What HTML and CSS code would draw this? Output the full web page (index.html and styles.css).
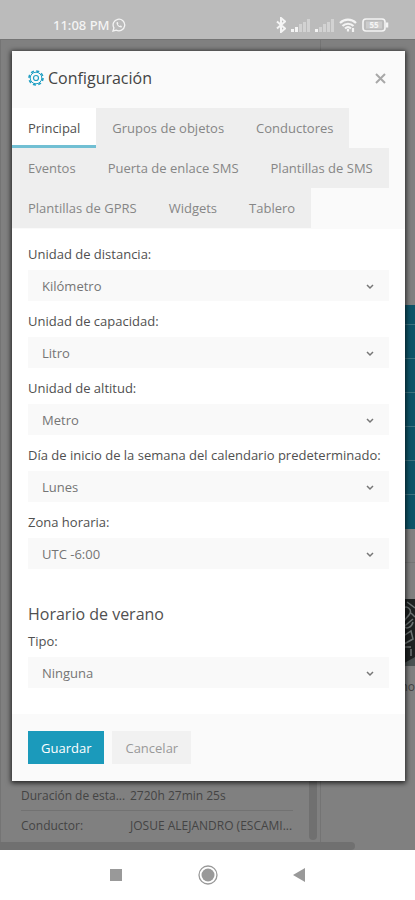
FILE: index.html
```html
<!DOCTYPE html>
<html lang="es">
<head>
<meta charset="utf-8">
<meta name="viewport" content="width=device-width, initial-scale=1">
<title>Configuración</title>
<link rel="stylesheet" href="styles.css">
</head>
<body>
<header class="status">
  <div class="status-group">
    <span class="clock">11:08 PM</span>
    <svg width="14" height="14" viewBox="0 0 14 14" fill="none" stroke="currentColor" stroke-width="1.3"><path d="M1 13l.9-3.1A5.8 5.8 0 1 1 4.200 12.100z"/><path d="M4.600 4.200c-.6 2.600 2.400 5.600 5 5.200l.3-1.300-1.500-.7-.7.7c-.9-.4-1.500-1.100-1.900-1.900l.6-.7-.6-1.500z" fill="currentColor" stroke="none"/></svg>
  </div>
  <div class="status-group status-icons">
    <svg width="10" height="16" viewBox="0 0 10 16" fill="none" stroke="currentColor" stroke-width="2"><path d="M1 4.500l8 7-4 3.500V1l4 3.500-8 7"/></svg>
    <svg width="19" height="14" viewBox="0 0 19 14" fill="currentColor"><path d="M0 11h3v3H0zM4 9h3v5H4z"/><path opacity=".4" d="M8 6h3v8H8zM12 4h3v10h-3zM16 1h3v13h-3z"/></svg>
    <svg width="19" height="14" viewBox="0 0 19 14" fill="currentColor"><path d="M0 11h3v3H0z"/><path opacity=".4" d="M4 9h3v5H4zM8 6h3v8H8zM12 4h3v10h-3zM16 1h3v13h-3z"/></svg>
    <svg width="18" height="14" viewBox="0 0 18 14" fill="none" stroke="currentColor" stroke-width="2.200"><path d="M1 5c4.500-4.500 11.500-4.500 16 0M3.500 8c3-3 8-3 11 0M6 10.500c2-1.800 4-1.800 6 0"/><path d="M9 11v2.500M14 10v4"/></svg>
    <svg width="27" height="14" viewBox="0 0 27 14" fill="none" stroke="currentColor" stroke-width="1.600"><rect x="1" y="1" width="22" height="12" rx="3"/><path d="M25 4.500v5" stroke-width="2.500"/><rect x="4" y="3.500" width="16" height="7" fill="currentColor" fill-opacity=".3" stroke="none"/><text class="battery-text" x="12" y="10" text-anchor="middle">55</text></svg>
  </div>
</header>

<main class="app">
  <div class="monitor">
    <section class="details">
      <table class="facts">
        <tbody>
          <tr><th scope="row">Duración de esta...</th><td>2720h 27min 25s</td></tr>
          <tr><th scope="row">Conductor:</th><td>JOSUE ALEJANDRO (ESCAMI...</td></tr>
        </tbody>
      </table>
      <div class="scroll-y"></div>
    </section>
    <aside class="side">
      <ul class="side-list"><li></li><li></li><li></li><li></li><li></li><li></li><li></li></ul>
      <div class="side-code">
        <svg width="16" height="67" viewBox="0 0 16 67" fill="none" stroke="#6d7474"><rect width="16" height="67" fill="#1d2121" stroke="none"/><path d="M3 10c5-5 11 1 7 6s-7 7-5 11 8 1 9-4M2 30l12-10M3 38l9-6 2 8-9 5M4 48h8M5 44v10M12 50v7M8 3l8 6M12 14l4 4" stroke-width="1.500"/><path d="M0 67l16-9v9z" fill="#4b5252" stroke="none"/></svg>
        <span>no</span>
      </div>
    </aside>
    <div class="scroll-x"></div>
  </div>

  <div class="overlay">
    <form class="dialog" role="dialog" aria-labelledby="dialog-title">
      <header class="dialog-head">
        <svg width="16" height="16" viewBox="0 0 16 16" fill="none" stroke="currentColor"><circle cx="8" cy="8" r="7" stroke-width="1.600" stroke-dasharray="3.100 2.398"/><circle cx="8" cy="8" r="5.800"/><circle cx="8" cy="8" r="2.500" stroke-width="1.200"/></svg>
        <h1 id="dialog-title">Configuración</h1>
        <button class="close" type="button" aria-label="Cerrar"><svg width="11" height="11" viewBox="0 0 11 11" fill="none" stroke="currentColor" stroke-width="2"><path d="M1 1l9 9M10 1l-9 9"/></svg></button>
      </header>
      <nav class="tabs">
        <a class="tab active" href="#principal">Principal</a>
        <a class="tab" href="#grupos">Grupos de objetos</a>
        <a class="tab" href="#conductores">Conductores</a>
        <a class="tab" href="#eventos">Eventos</a>
        <a class="tab" href="#puerta">Puerta de enlace SMS</a>
        <a class="tab" href="#sms">Plantillas de SMS</a>
        <a class="tab" href="#gprs">Plantillas de GPRS</a>
        <a class="tab" href="#widgets">Widgets</a>
        <a class="tab" href="#tablero">Tablero</a>
      </nav>
      <div class="fields">
        <div class="field">
          <label for="distancia">Unidad de distancia:</label>
          <div class="picker"><select id="distancia"><option>Kilómetro</option></select><svg class="chevron" width="8" height="6" viewBox="0 0 8 6"><path d="M1 1l3 3 3-3"/></svg></div>
        </div>
        <div class="field">
          <label for="capacidad">Unidad de capacidad:</label>
          <div class="picker"><select id="capacidad"><option>Litro</option></select><svg class="chevron" width="8" height="6" viewBox="0 0 8 6"><path d="M1 1l3 3 3-3"/></svg></div>
        </div>
        <div class="field">
          <label for="altitud">Unidad de altitud:</label>
          <div class="picker"><select id="altitud"><option>Metro</option></select><svg class="chevron" width="8" height="6" viewBox="0 0 8 6"><path d="M1 1l3 3 3-3"/></svg></div>
        </div>
        <div class="field">
          <label for="semana">Día de inicio de la semana del calendario predeterminado:</label>
          <div class="picker"><select id="semana"><option>Lunes</option></select><svg class="chevron" width="8" height="6" viewBox="0 0 8 6"><path d="M1 1l3 3 3-3"/></svg></div>
        </div>
        <div class="field">
          <label for="zona">Zona horaria:</label>
          <div class="picker"><select id="zona"><option>UTC -6:00</option></select><svg class="chevron" width="8" height="6" viewBox="0 0 8 6"><path d="M1 1l3 3 3-3"/></svg></div>
        </div>
        <h2>Horario de verano</h2>
        <div class="field">
          <label for="tipo">Tipo:</label>
          <div class="picker"><select id="tipo"><option>Ninguna</option></select><svg class="chevron" width="8" height="6" viewBox="0 0 8 6"><path d="M1 1l3 3 3-3"/></svg></div>
        </div>
      </div>
      <footer class="actions">
        <button class="btn primary" type="button">Guardar</button>
        <button class="btn" type="button">Cancelar</button>
      </footer>
    </form>
  </div>
</main>

<footer class="system-nav">
  <button type="button" aria-label="Recientes"><svg width="20" height="20" viewBox="0 0 20 20"><path d="M4 4h12v12H4z" fill="#999"/></svg></button>
  <button type="button" aria-label="Inicio"><svg width="20" height="20" viewBox="0 0 20 20"><circle cx="10" cy="10" r="9" fill="none" stroke="#999" stroke-width="1.300"/><circle cx="10" cy="10" r="6.500" fill="#999"/></svg></button>
  <button type="button" aria-label="Atrás"><svg width="20" height="20" viewBox="0 0 20 20"><path d="M15 3v14L3 10z" fill="#999"/></svg></button>
</footer>
</body>
</html>
```
FILE: styles.css
```css
* {
  box-sizing: border-box;
}

body {
  margin: 0;
  min-height: 100vh;
  display: flex;
  flex-direction: column;
  font-family: "Open Sans", "Noto Sans", sans-serif;
  font-size: 13px;
  color: #505050;
  background: #fff;
}

button,
select {
  font: inherit;
  border: 0;
  border-radius: 0;
}

svg {
  display: block;
  flex: none;
}

/* Phone status bar */
.status {
  display: flex;
  justify-content: space-between;
  height: 39px;
  padding: 10px 26px 0 53px;
  color: #f4f4f4;
  background: #bbb;
}

.status-group {
  display: flex;
  align-items: center;
  gap: 2px;
}

.status-icons {
  gap: 5px;
}

.clock {
  font-family: "Noto Sans", sans-serif;
  font-weight: 500;
}

.battery-text {
  font-size: 8px;
  font-weight: 700;
  fill: currentColor;
  stroke: none;
}

/* Dimmed page behind the dialog */
.app {
  position: relative;
  flex: 1;
  display: flex;
  overflow: hidden;
  background: #808080;
  border-top: 1px solid #757575;
}

.monitor {
  flex: 1;
  display: grid;
  grid-template-columns: 321px 1fr;
  grid-template-rows: 1fr auto;
  color: #444;
  font-size: 12px;
}

.details {
  display: flex;
  align-items: flex-end;
  justify-content: space-between;
  padding: 0 3px 2px 20px;
  border-right: 1px solid #747474;
  border-left: 1px solid #747474;
}

.facts {
  width: 272px;
  table-layout: fixed;
  border-collapse: collapse;
}

.facts th,
.facts td {
  height: 30px;
  padding: 0;
  text-align: left;
  font-weight: 400;
  white-space: nowrap;
  border-top: 1px solid #727272;
}

.facts th {
  width: 109px;
}

.scroll-y {
  width: 8px;
  height: 100px;
  border-radius: 4px;
  background: #707070;
}

.scroll-x {
  width: 355px;
  height: 8px;
  background: #707070;
  border-radius: 0 4px 4px 0;
}

.side {
  padding-top: 265px;
  overflow: hidden;
}

.side-list {
  margin: 0;
  padding: 0;
  list-style: none;
  background: #0d5468;
}

.side-list li {
  height: 34px;
  border-bottom: 1px solid #3d7380;
}

.side-list li:first-child {
  height: 20px;
}

.side-list li:last-child {
  border-bottom: 0;
}

.side-code {
  display: flex;
  flex-direction: column;
  align-items: flex-end;
  gap: 12px;
  margin-top: 33px;
  padding-top: 36px;
  border-top: 1px solid #757575;
}

/* Dialog */
.overlay {
  position: absolute;
  inset: 0;
  padding: 11px 10px 0 12px;
}

.dialog {
  background: #fff;
  box-shadow: 0 1px 5px 1px rgba(0, 0, 0, .75);
}

.dialog-head {
  display: flex;
  align-items: center;
  gap: 4px;
  height: 57px;
  padding: 0 19px 3px 16px;
  color: #1f9fc3;
  background: #fafafa;
}

.dialog-head h1 {
  flex: 1;
  margin: 0;
  font-size: 16px;
  line-height: 22px;
  font-weight: 400;
  color: #444;
}

.close {
  padding: 0;
  color: #a8a8a8;
  background: none;
}

.tabs {
  display: flex;
  flex-wrap: wrap;
  padding-bottom: 1px;
  background: #fafafa;
}

.tab {
  height: 40px;
  padding: 0 16px;
  line-height: 40px;
  color: #868686;
  text-decoration: none;
  background: #eee;
}

.tab.active {
  color: #505050;
  background: #fff;
  border-bottom: 3px solid #71bfd3;
}

.fields {
  padding: 15px 16px 16px;
}

.field {
  margin-bottom: 10px;
}

.field label {
  display: block;
  margin-bottom: 6px;
  line-height: 20px;
}

.picker {
  display: grid;
  align-items: center;
}

.picker select,
.chevron {
  grid-area: 1 / 1;
}

.picker select {
  appearance: none;
  width: 100%;
  height: 31px;
  padding: 0 30px 0 14px;
  color: #757575;
  background: #f9f9f9;
}

.chevron {
  justify-self: end;
  margin-right: 15px;
  margin-top: 2px;
  fill: none;
  stroke: #777;
  stroke-width: 1.5;
  pointer-events: none;
}

.fields h2 {
  margin: 33px 0 5px;
  font-size: 16px;
  line-height: 24px;
  font-weight: 400;
}

.actions {
  display: flex;
  gap: 8px;
  padding: 17px 16px;
  background: #fafafa;
}

.btn {
  height: 33px;
  padding: 0 13px;
  color: #999;
  background: #f1f1f1;
}

.btn.primary {
  color: #fff;
  font-weight: 500;
  background: #1b9abb;
}

/* Phone navigation bar */
.system-nav {
  display: flex;
  justify-content: center;
  align-items: center;
  gap: 72px;
  height: 50px;
}

.system-nav button {
  padding: 0;
  background: none;
}
```
